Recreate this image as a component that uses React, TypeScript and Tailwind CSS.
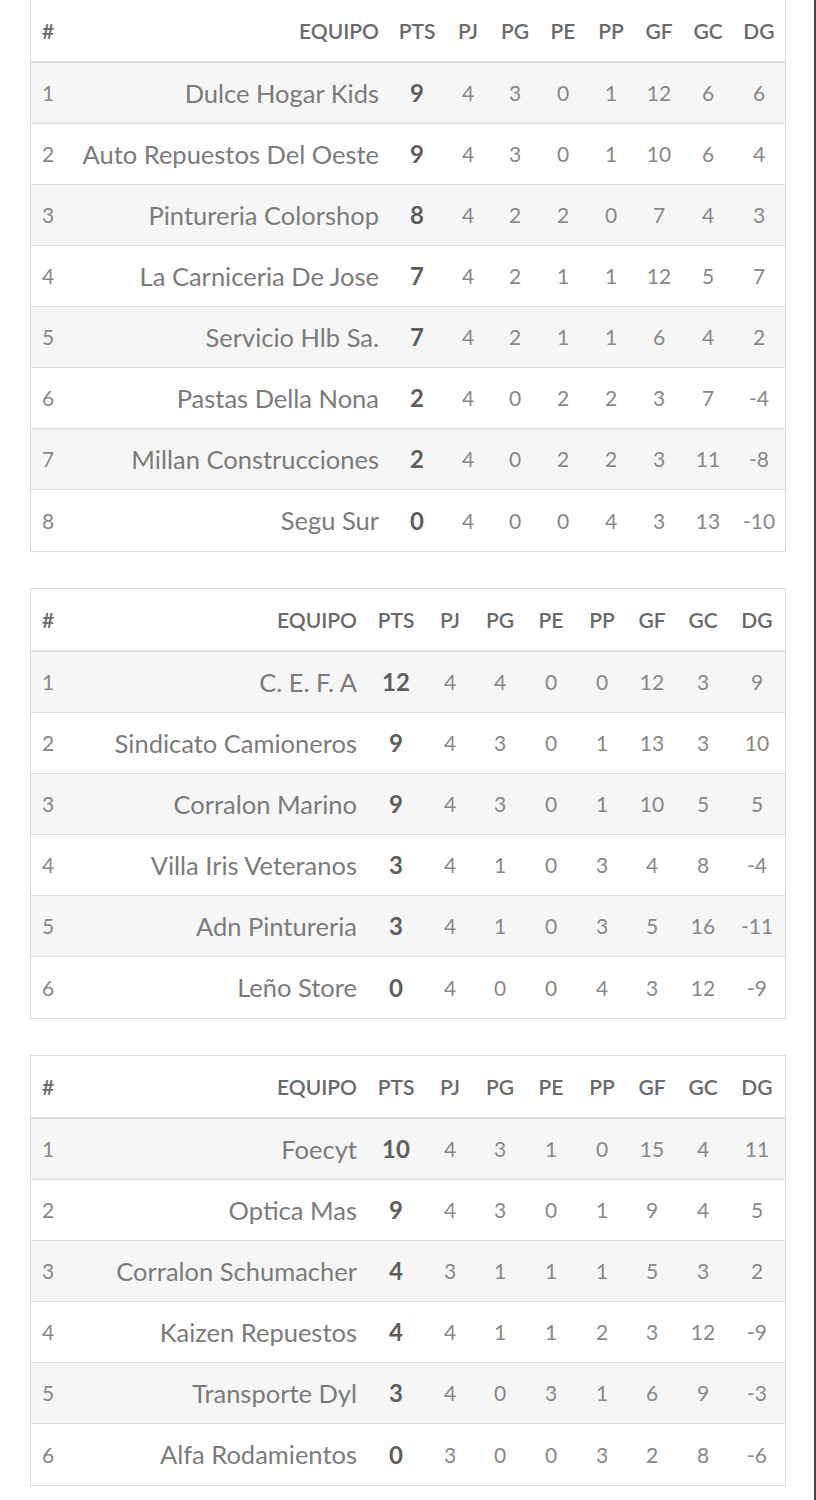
import React from "react";

type Row = [string, number, number, number, number, number, number, number, number];

const groups: { cols: string; rows: Row[] }[] = [
  {
    cols: "grid-cols-[44px_1fr_56px_46px_48px_48px_48px_48px_50px_52px]",
    rows: [
      ["Dulce Hogar Kids", 9, 4, 3, 0, 1, 12, 6, 6],
      ["Auto Repuestos Del Oeste", 9, 4, 3, 0, 1, 10, 6, 4],
      ["Pintureria Colorshop", 8, 4, 2, 2, 0, 7, 4, 3],
      ["La Carniceria De Jose", 7, 4, 2, 1, 1, 12, 5, 7],
      ["Servicio Hlb Sa.", 7, 4, 2, 1, 1, 6, 4, 2],
      ["Pastas Della Nona", 2, 4, 0, 2, 2, 3, 7, -4],
      ["Millan Construcciones", 2, 4, 0, 2, 2, 3, 11, -8],
      ["Segu Sur", 0, 4, 0, 0, 4, 3, 13, -10],
    ],
  },
  {
    cols: "grid-cols-[44px_1fr_58px_50px_50px_52px_50px_50px_52px_56px]",
    rows: [
      ["C. E. F. A", 12, 4, 4, 0, 0, 12, 3, 9],
      ["Sindicato Camioneros", 9, 4, 3, 0, 1, 13, 3, 10],
      ["Corralon Marino", 9, 4, 3, 0, 1, 10, 5, 5],
      ["Villa Iris Veteranos", 3, 4, 1, 0, 3, 4, 8, -4],
      ["Adn Pintureria", 3, 4, 1, 0, 3, 5, 16, -11],
      ["Leño Store", 0, 4, 0, 0, 4, 3, 12, -9],
    ],
  },
  {
    cols: "grid-cols-[44px_1fr_58px_50px_50px_52px_50px_50px_52px_56px]",
    rows: [
      ["Foecyt", 10, 4, 3, 1, 0, 15, 4, 11],
      ["Optica Mas", 9, 4, 3, 0, 1, 9, 4, 5],
      ["Corralon Schumacher", 4, 3, 1, 1, 1, 5, 3, 2],
      ["Kaizen Repuestos", 4, 4, 1, 1, 2, 3, 12, -9],
      ["Transporte Dyl", 3, 4, 0, 3, 1, 6, 9, -3],
      ["Alfa Rodamientos", 0, 3, 0, 0, 3, 2, 8, -6],
    ],
  },
];

const heads = ["PJ", "PG", "PE", "PP", "GF", "GC", "DG"];

function Standings({ cols, rows, first }: { cols: string; rows: Row[]; first?: boolean }) {
  return (
    <div className={`ml-[30px] w-[756px] border border-[#dddddd] ${first ? "-mt-px" : ""} mb-9`}>
      {/* header */}
      <div className={`grid ${cols} h-[63px] border-b-2 border-[#dddddd] items-center font-semibold text-[#6a6a6a] text-[21px]`}>
        <div className="pl-[11px]">#</div>
        <div className="text-right pr-[10px]">EQUIPO</div>
        <div className="text-center">PTS</div>
        {heads.map((h) => (
          <div key={h} className="text-center">
            {h}
          </div>
        ))}
      </div>
      {rows.map((r, i) => (
        <div
          key={r[0]}
          className={`grid ${cols} h-[61px] items-center text-[#888888] text-[21px] ${
            i < rows.length - 1 ? "border-b border-[#dddddd]" : ""
          } ${i % 2 === 0 ? "bg-[#f6f6f6]" : "bg-white"}`}>
          <div className="pl-[11px]">{i + 1}</div>
          <div className="text-right pr-[10px] text-[25.5px] text-[#7b7b7b] whitespace-nowrap">{r[0]}</div>
          <div className="text-center font-bold text-[24px] text-[#5e5e5e]">{r[1]}</div>
          {r.slice(2).map((v, j) => (
            <div key={j} className="text-center">
              {v}
            </div>
          ))}
        </div>
      ))}
    </div>
  );
}

export default function App() {
  return (
    <div
      className="w-[816px] h-[1500px] overflow-hidden bg-white border-r-2 border-[#4a4a4a]"
      style={{ fontFamily: "Lato, 'Open Sans', sans-serif" }}>
      {groups.map((g, i) => (
        <Standings key={i} cols={g.cols} rows={g.rows} first={i === 0} />
      ))}
    </div>
  );
}
